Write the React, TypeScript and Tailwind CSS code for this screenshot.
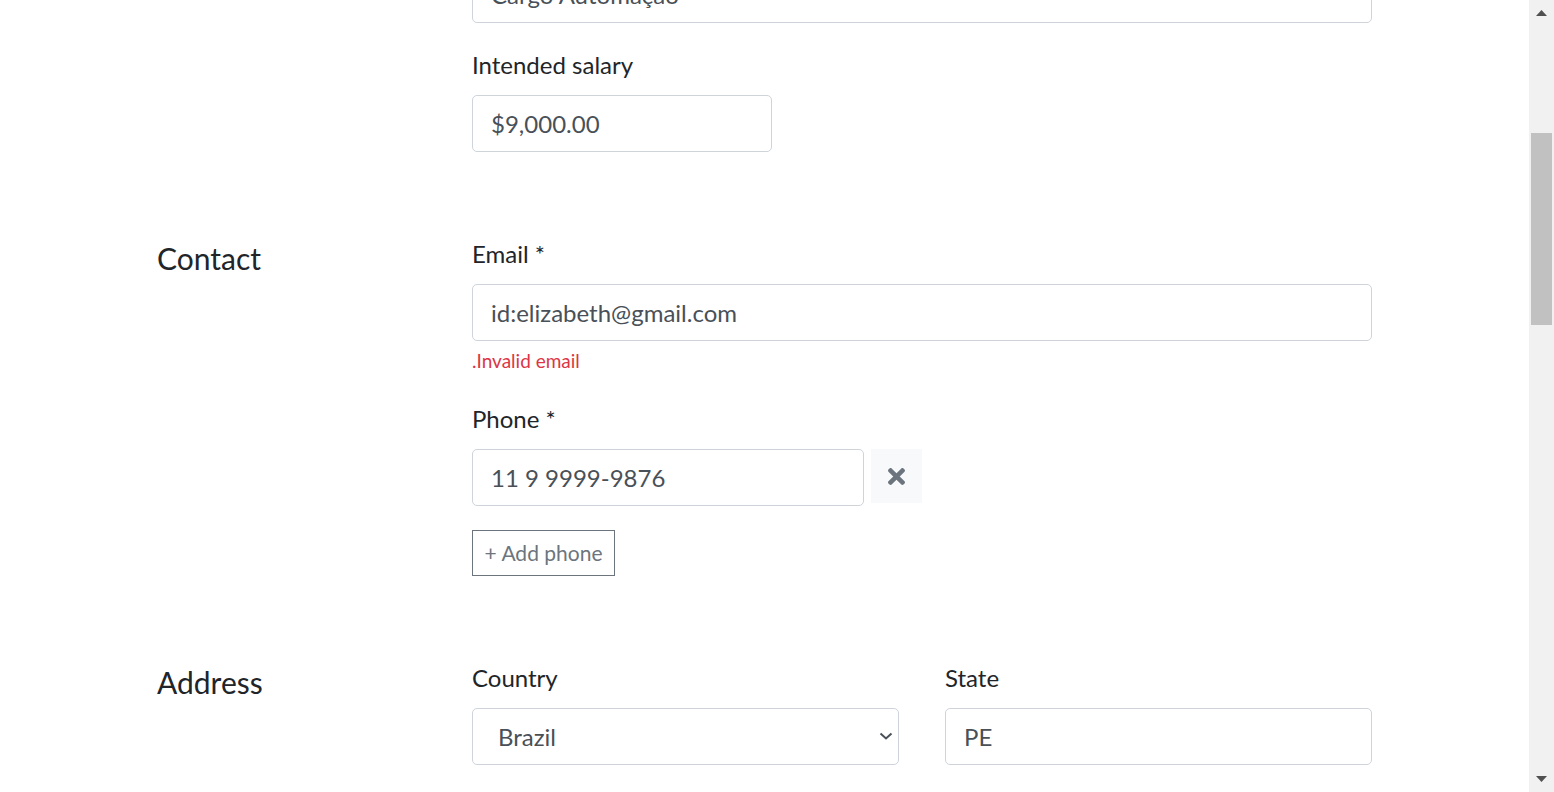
import { useState } from 'react';

const inputCls =
  'block w-full h-[57px] rounded-[5px] border border-[#ced4da] bg-white px-[18px] text-[24px] text-[#495057] outline-none';
const labelCls = 'block text-[24px] leading-[32px] text-[#212529] mb-[14px]';

function Section({ title, children }: { title?: string; children: React.ReactNode }) {
  return (
    <div className="flex">
      <div className="w-[315px] shrink-0">
        {title && <h2 className="mt-[2px] text-[30px] leading-[36px] text-[#212529]">{title}</h2>}
      </div>
      <div className="w-[900px]">{children}</div>
    </div>
  );
}

function Scrollbar() {
  return (
    <div className="w-[25px] shrink-0 h-full bg-[#f1f1f1] flex flex-col">
      <div className="h-[26px] flex items-center justify-center">
        <svg width="11" height="6" viewBox="0 0 11 6">
          <polygon points="0,6 5.5,0 11,6" fill="#505050" />
        </svg>
      </div>
      <div className="h-[107px]" />
      <div className="mx-[2px] h-[192px] bg-[#c1c1c1]" />
      <div className="flex-1" />
      <div className="h-[26px] flex items-center justify-center">
        <svg width="11" height="6" viewBox="0 0 11 6">
          <polygon points="0,0 11,0 5.5,6" fill="#505050" />
        </svg>
      </div>
    </div>
  );
}

export default function App() {
  const [email, setEmail] = useState('id:elizabeth@gmail.com');
  const [phone, setPhone] = useState('11 9 9999-9876');
  const [salary, setSalary] = useState('$9,000.00');
  const [role, setRole] = useState('Cargo Automação');
  const [country, setCountry] = useState('Brazil');
  const [state, setState] = useState('PE');

  return (
    <div className="flex h-screen overflow-hidden bg-white font-['Lato','Open_Sans',sans-serif]">
      <main className="flex-1 overflow-hidden">
        <div className="mx-auto w-[1215px] mt-[-34px]">
          <Section>
            <input className={inputCls} value={role} onChange={(e) => setRole(e.target.value)} />
            <div className="mt-[26px]">
              <label className={labelCls}>Intended salary</label>
              <input
                className={inputCls + ' !w-[300px]'}
                value={salary}
                onChange={(e) => setSalary(e.target.value)}
              />
            </div>
          </Section>

          <div className="mt-[86px]">
            <Section title="Contact">
              <div>
                <label className={labelCls}>Email *</label>
                <input className={inputCls} value={email} onChange={(e) => setEmail(e.target.value)} />
                <div className="mt-[6px] text-[19px] leading-[27px] text-[#dc3545]">.Invalid email</div>
              </div>
              <div className="mt-[29px]">
                <label className={labelCls}>Phone *</label>
                <div className="flex items-start gap-[7px]">
                  <input
                    className={inputCls + ' !w-[392px]'}
                    value={phone}
                    onChange={(e) => setPhone(e.target.value)}
                  />
                  <button className="w-[51px] h-[54px] bg-[#f8f9fa] flex items-center justify-center">
                    <svg className="w-[17px] h-[17px]" viewBox="0 80 352 352" fill="#6c757d">
                      <path d="M242.72 256l100.07-100.07c12.28-12.28 12.28-32.19 0-44.48l-22.24-22.24c-12.28-12.28-32.19-12.28-44.48 0L176 189.28 75.93 89.21c-12.28-12.28-32.19-12.28-44.48 0L9.21 111.45c-12.28 12.28-12.28 32.19 0 44.48L109.28 256 9.21 356.07c-12.28 12.28-12.28 32.19 0 44.48l22.24 22.24c12.28 12.28 32.2 12.28 44.48 0L176 322.72l100.07 100.07c12.28 12.28 32.2 12.28 44.48 0l22.24-22.24c12.28-12.28 12.28-32.19 0-44.48L242.72 256z" />
                    </svg>
                  </button>
                </div>
                <button className="mt-[24px] h-[46px] w-[143px] border border-[#6c757d] text-[21px] text-[#6c757d]">
                  + Add phone
                </button>
              </div>
            </Section>
          </div>

          <div className="mt-[86px]">
            <Section title="Address">
              <div className="grid grid-cols-2 gap-[46px]">
                <div>
                  <label className={labelCls}>Country</label>
                  <div className="relative">
                    <select
                      className={inputCls + ' appearance-none !pl-[25px]'}
                      value={country}
                      onChange={(e) => setCountry(e.target.value)}
                    >
                      <option>Brazil</option>
                      <option>Portugal</option>
                      <option>United States</option>
                    </select>
                    <svg
                      className="pointer-events-none absolute right-[6px] top-[24px]"
                      width="14"
                      height="8"
                      viewBox="0 0 14 8"
                    >
                      <path d="M1.5 1.5 L7 6.5 L12.5 1.5" fill="none" stroke="#495057" strokeWidth="2" />
                    </svg>
                  </div>
                </div>
                <div>
                  <label className={labelCls}>State</label>
                  <input className={inputCls} value={state} onChange={(e) => setState(e.target.value)} />
                </div>
              </div>
            </Section>
          </div>
        </div>
      </main>
      <Scrollbar />
    </div>
  );
}
